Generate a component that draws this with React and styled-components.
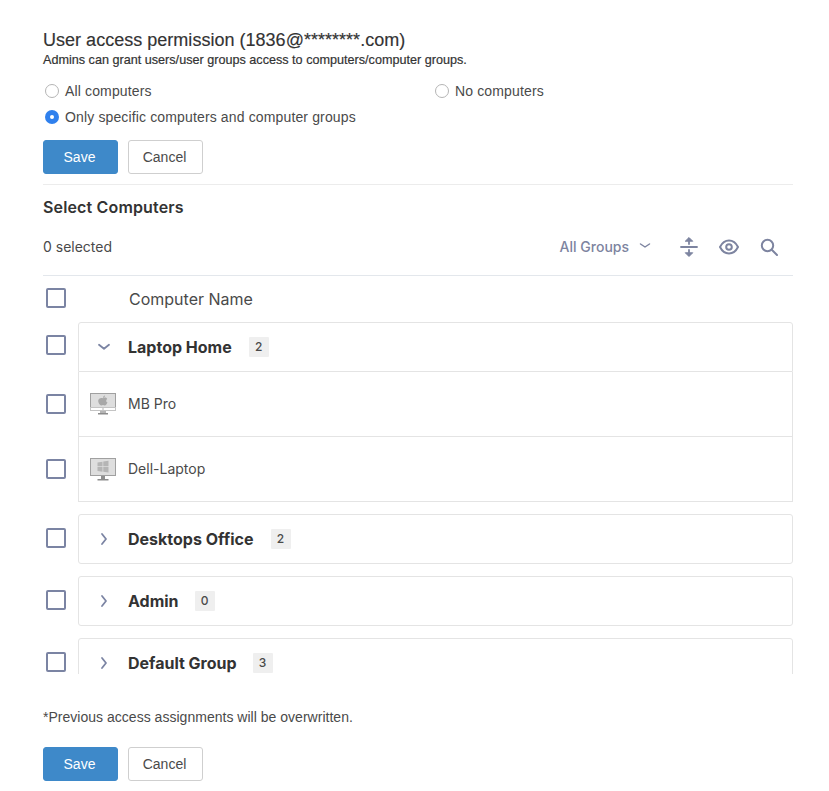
import React from "react";
import styled, { createGlobalStyle } from "styled-components";

const Global = createGlobalStyle`
  html, body { margin: 0; padding: 0; background: #fff; }
  body { font-family: "Liberation Sans", Arial, sans-serif; color: #333; }
`;
const Page = styled.div`
  width: 829px; height: 791px; box-sizing: border-box; overflow: hidden;
  padding: 29px 36px 0 43px;
`;
const Title = styled.h1`
  margin: 0; font-size: 18px; line-height: 22px; font-weight: 400; letter-spacing: 0.02px; color: #333; -webkit-text-stroke: 0.15px #333;
`;
const Sub = styled.p`
  margin: 1px 0 0; font-size: 12.63px; line-height: 16px; color: #333; -webkit-text-stroke: 0.2px #333;
`;
const RadioGrid = styled.div`
  display: grid; grid-template-columns: 390px 1fr; grid-auto-rows: 26px; margin-top: 10px;
  align-items: center;
`;
const RadioItem = styled.label`
  display: flex; align-items: center; gap: 6px; font-size: 14px; letter-spacing: 0.14px; color: #4a4a4a;
  grid-column: ${p => p.$full ? "1 / -1" : "auto"}; padding-left: 2px;
`;
const RadioMark = styled.span`
  width: 14px; height: 14px; border-radius: 50%; box-sizing: border-box; flex: none;
  background: ${p => p.$on ? "#2f80ed" : "#fff"};
  border: ${p => p.$on ? "none" : "1px solid #b5b5b5"};
  display: flex; align-items: center; justify-content: center;
  &::after { content: ""; display: ${p => p.$on ? "block" : "none"}; width: 4px; height: 4px; border-radius: 50%; background: #fff; }
`;
const Buttons = styled.div`
  display: flex; gap: 10px; margin-top: ${p => p.$mt}px;
`;
const Btn = styled.button`
  width: 75px; height: 34px; box-sizing: border-box; border-radius: 3px; font: 14px "Liberation Sans", Arial, sans-serif;
  background: ${p => p.$primary ? "#3e89c9" : "#fff"};
  color: ${p => p.$primary ? "#fff" : "#4a4a4a"};
  border: 1px solid ${p => p.$primary ? "#3e89c9" : "#cfcfcf"};
  padding: 0 2px 0 0;
`;
const Rule = styled.div`
  height: 1px; background: ${p => p.$c || "#ececec"}; margin-top: ${p => p.$mt}px;
`;
const SectionTitle = styled.h2`
  margin: 13px 0 0; font: 600 16px/18px Inter, sans-serif; letter-spacing: 0.15px; color: #333;
`;
const Toolbar = styled.div`
  display: flex; align-items: center; height: 24px; margin-top: 18px;
`;
const Selected = styled.span`
  font: 400 14px Inter, sans-serif; color: #4a4a4a; flex: 1;
`;
const Filter = styled.span`
  font: 500 14px Inter, sans-serif; color: #7d84a0; display: flex; align-items: center; gap: 10px;
`;
const Tools = styled.div`
  display: flex; align-items: center; gap: 21px; margin: 2px 15px 0 29px; color: #7d84a0;
`;
const List = styled.div`
  height: 398px; overflow: hidden; display: flex; flex-direction: column;
`;
const Row = styled.div`
  display: flex; align-items: stretch;
  margin-top: ${p => p.$mt || 0}px;
`;
const CheckCell = styled.div`
  width: 35px; flex: none; padding: 0 0 ${p => p.$pb ?? 2}px 3px; box-sizing: border-box; display: flex; align-items: center;
`;
const Check = styled.span`
  width: 20px; height: 20px; box-sizing: border-box; border: 2px solid #7b84a3; border-radius: 2px; display: block;
`;
const HeaderRow = styled(Row)`
  height: 46px; flex: none;
`;
const HeaderLabel = styled.div`
  font: 400 16px Inter, sans-serif; color: #4a4a4a; padding-left: 51px; display: flex; align-items: center;
`;
const GroupHead = styled.div`
  flex: 1; height: 50px; box-sizing: border-box; display: flex; align-items: center;
  border: 1px solid #e4e4e4; border-radius: ${p => p.$open ? "3px 3px 0 0" : "3px"};
`;
const Chevron = styled.span`
  width: 49px; flex: none; display: flex; justify-content: center; color: #7b84a3;
`;
const GroupName = styled.span`
  font: 700 16px Inter, sans-serif; color: #333;
`;
const Count = styled.span`
  margin-left: ${p => p.$gap ?? 17}px; min-width: 20px; height: 20px; background: #efefef; color: #4a4a4a; border-radius: 1px;
  font: 500 12px/20px Inter, sans-serif; text-align: center;
`;
const Machine = styled.div`
  flex: 1; height: 65px; box-sizing: border-box; display: flex; align-items: center;
  border: 1px solid #e4e4e4; border-top: none; padding-left: 11px; gap: 12px;
  font: 400 14px Inter, sans-serif; color: #4a4a4a;
`;
const MachineName = styled.span`
  padding-bottom: 2px;
`;
const Note = styled.p`
  margin: 35px 0 0; font-size: 14px; line-height: 16px; letter-spacing: 0.02px; color: #4a4a4a;
`;

const Down = () => (
  <svg width="14" height="14" viewBox="0 0 14 14" fill="none" stroke="currentColor" strokeWidth="1.8" strokeLinecap="round" strokeLinejoin="round"><path d="M2 4.8 7 8.8l5-4" /></svg>
);
const Right = () => (
  <svg width="14" height="14" viewBox="0 0 14 14" fill="none" stroke="currentColor" strokeWidth="1.8" strokeLinecap="round" strokeLinejoin="round"><path d="M5 2l4 5-4 5" /></svg>
);

const WindowsMonitor = () => (
  <svg width="26" height="23" viewBox="0 0 26 23" style={{ flex: "none" }}>
    <rect x="0.5" y="0.5" width="25" height="17" fill="#dedede" stroke="#a0a0a0" />
    <path d="M7.5 4.5l5-.8v4.6h-5zM13.3 3.6 18.500 2.800v5.500h-5.200zM7.500 9.100h5v4.600l-5-.8zM13.300 9.100h5.200v5.500l-5.200-.8z" fill="#b5b5b5" />
    <rect x="11" y="18" width="4" height="3" fill="#8f8f8f" />
    <rect x="7.5" y="21" width="11" height="1.5" fill="#8c8c8c" />
  </svg>
);
const AppleMonitor = () => (
  <svg width="26" height="23" viewBox="0 0 26 23" style={{ flex: "none" }}>
    <rect x="0.5" y="0.5" width="25" height="14" fill="#dedede" stroke="#a0a0a0" />
    <rect x="0.5" y="14.5" width="25" height="3" fill="#fff" stroke="#c4c4c4" />
    <circle cx="13" cy="16" r="0.7" fill="#999" />
    <path d="M13 5.300c1.200-1 3.400-1 4.200.6-1.500.9-1.300 3 .3 3.600-.6 1.500-1.700 3-2.700 3-.7 0-1.100-.4-1.800-.4s-1.100.4-1.800.4c-1.200 0-3-2.500-3-4.700 0-2.600 3-3.500 4.800-2.500zM13 4.900c0-1.200.8-2.100 2-2.300.1 1.200-.8 2.200-2 2.300z" fill="#a8a8a8" />
    <rect x="10" y="18" width="6" height="2" fill="#b5b5b5" />
    <rect x="8" y="20" width="10" height="1.500" fill="#8c8c8c" />
  </svg>
);

const groupsClosed = [
  ["Desktops Office", 2, 12, 17],
  ["Admin", 0, 12, 16],
  ["Default Group", 3, 12, 16],
];

const Actions = ({ mt }) => (
  <Buttons $mt={mt}>
    <Btn $primary>Save</Btn>
    <Btn>Cancel</Btn>
  </Buttons>
);

export default function App() {
  return (
    <Page>
      <Global />
      <Title>User access permission (1836@********.com)</Title>
      <Sub>Admins can grant users/user groups access to computers/computer groups.</Sub>
      <RadioGrid>
        <RadioItem><RadioMark />All computers</RadioItem>
        <RadioItem><RadioMark />No computers</RadioItem>
        <RadioItem $full><RadioMark $on />Only specific computers and computer groups</RadioItem>
      </RadioGrid>
      <Actions mt={10} />
      <Rule $mt={10} />
      <SectionTitle>Select Computers</SectionTitle>
      <Toolbar>
        <Selected>0 selected</Selected>
        <Filter>All Groups <svg width="12" height="12" viewBox="0 0 12 12" fill="none" stroke="currentColor" strokeWidth="1.5" strokeLinecap="round" strokeLinejoin="round"><path d="M1.5 4 6 7 10.5 4" /></svg></Filter>
        <Tools>
          <svg width="18" height="22" viewBox="0 0 18 22" fill="none" stroke="currentColor" strokeWidth="1.8" strokeLinecap="round" strokeLinejoin="round">
            <path d="M1 11h16" />
            <path d="M9 8V3" />
            <path d="M5.500 5 9 1.500 12.500 5z" fill="currentColor" strokeWidth="1" />
            <path d="M9 14v5" />
            <path d="M5.500 17 9 20.500 12.500 17z" fill="currentColor" strokeWidth="1" />
          </svg>
          <svg width="20" height="16" viewBox="0 0 20 16" fill="none" stroke="currentColor" strokeWidth="2">
            <path d="M1 8c2-4 5-6.5 9-6.5s7 2.5 9 6.5c-2 4-5 6.5-9 6.5S3 12 1 8z" />
            <circle cx="10" cy="8" r="2.8" />
          </svg>
          <svg width="18" height="18" viewBox="0 0 18 18" fill="none" stroke="currentColor" strokeWidth="2" strokeLinecap="round">
            <circle cx="7.5" cy="7.5" r="5.7" />
            <path d="M12 12l5 5" />
          </svg>
        </Tools>
      </Toolbar>
      <Rule $mt={17} $c="#e3e7ec" />
      <List>
        <HeaderRow>
          <CheckCell><Check /></CheckCell>
          <HeaderLabel>Computer Name</HeaderLabel>
        </HeaderRow>
        <Row>
          <CheckCell $pb={4}><Check /></CheckCell>
          <GroupHead $open>
            <Chevron><Down /></Chevron>
            <GroupName>Laptop Home</GroupName>
            <Count>2</Count>
          </GroupHead>
        </Row>
        <Row>
          <CheckCell><Check /></CheckCell>
          <Machine><AppleMonitor /><MachineName>MB Pro</MachineName></Machine>
        </Row>
        <Row>
          <CheckCell><Check /></CheckCell>
          <Machine>
            <WindowsMonitor />
            <MachineName>Dell-Laptop</MachineName>
          </Machine>
        </Row>
        {groupsClosed.map(([name, n, mt, gap]) => (
          <Row key={name} $mt={mt}>
            <CheckCell><Check /></CheckCell>
            <GroupHead>
              <Chevron><Right /></Chevron>
              <GroupName>{name}</GroupName>
              <Count $gap={gap}>{n}</Count>
            </GroupHead>
          </Row>
        ))}
      </List>
      <Note>*Previous access assignments will be overwritten.</Note>
      <Actions mt={22} />
    </Page>
  );
}
